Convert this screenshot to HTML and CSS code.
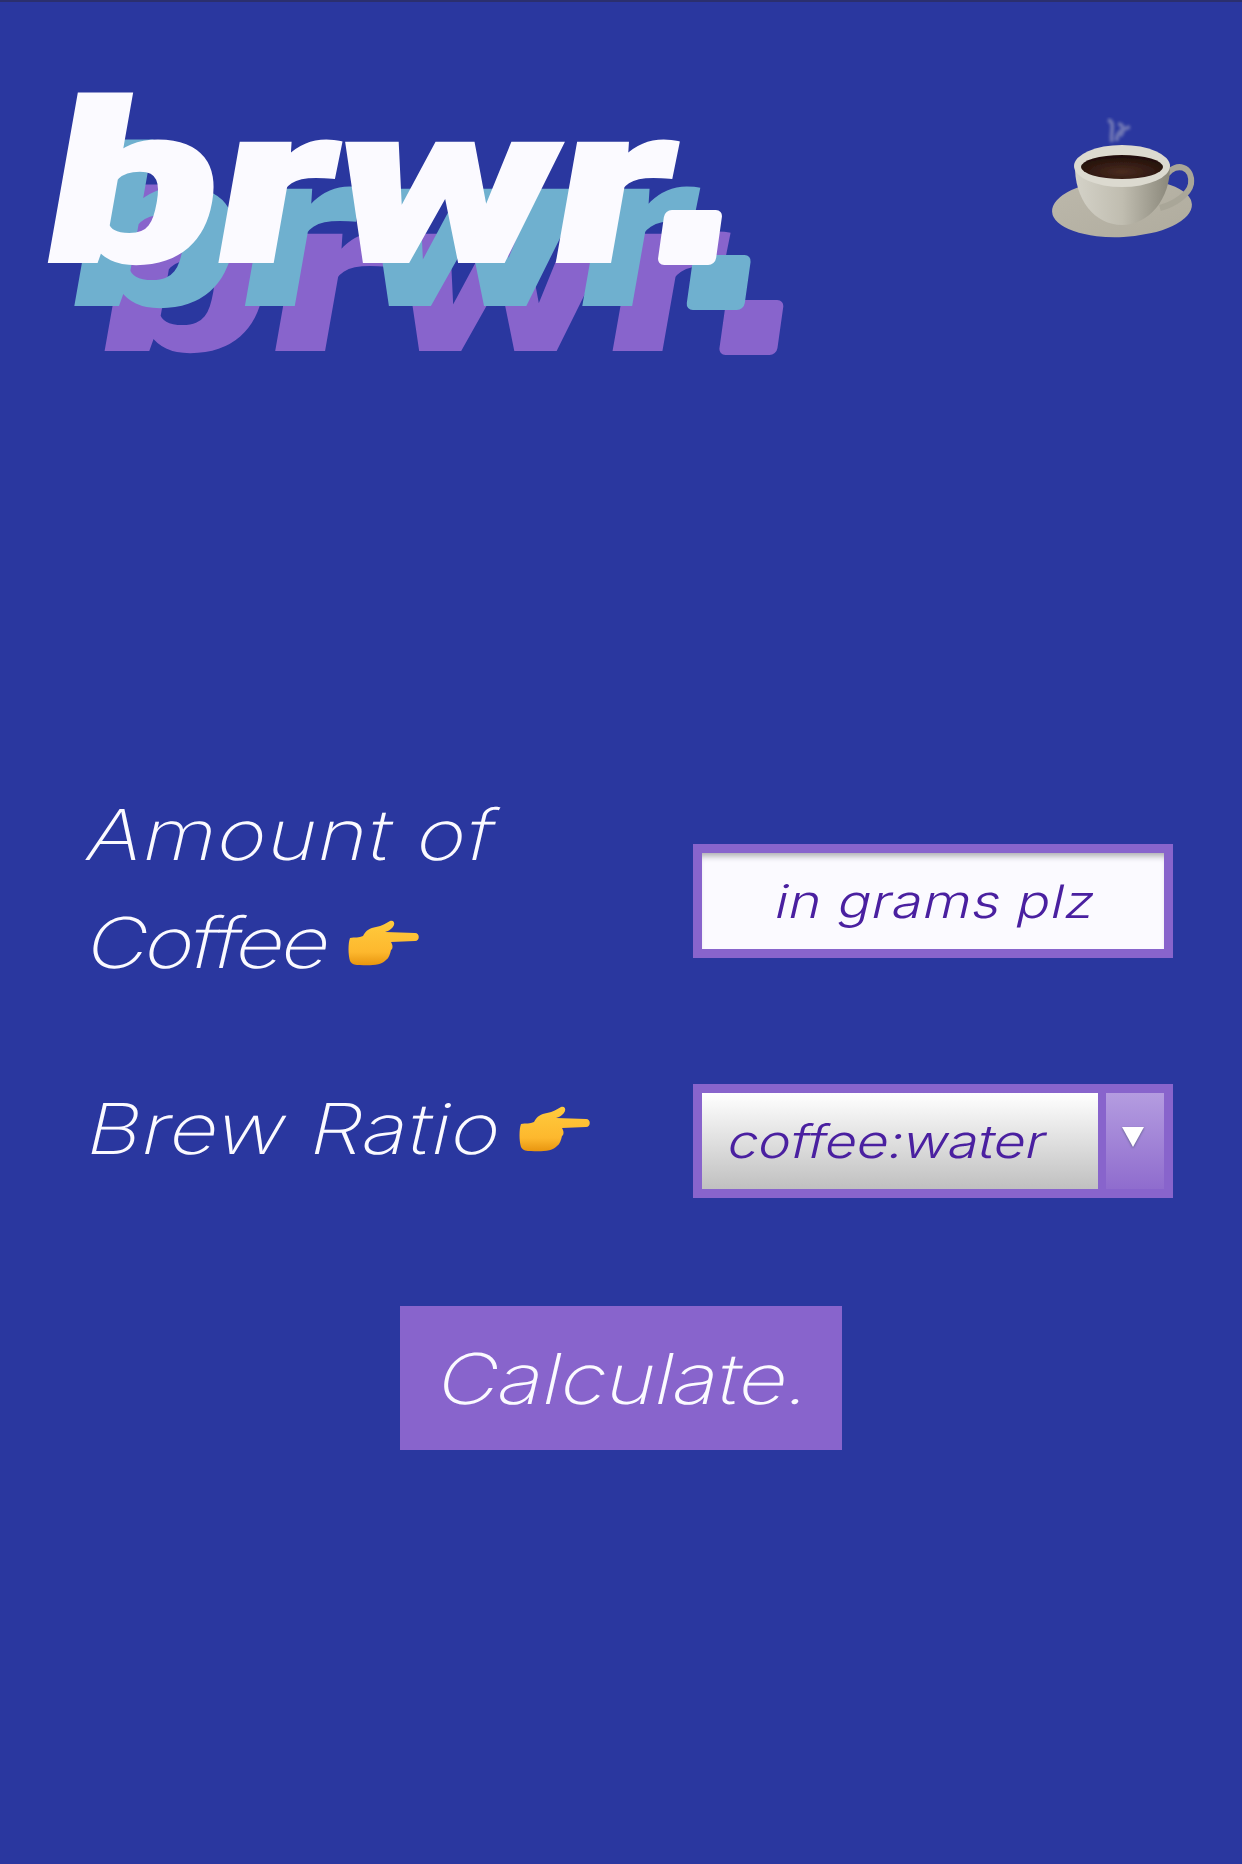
FILE: index.html
```html
<!DOCTYPE html>
<html>
  <head>
    <title>brwr.</title>
    <link rel="stylesheet" href="styles.css">
  </head>
  <body>
    <svg class="defs" width="0" height="0">
      <defs>
        <linearGradient id="handFill" x1="0" y1="0" x2="0" y2="1">
          <stop offset="0" stop-color="#ffcb3d" />
          <stop offset="0.7" stop-color="#fdb82e" />
          <stop offset="1" stop-color="#e8950f" />
        </linearGradient>
        <symbol id="hand" viewBox="16 18 76 50">
          <path fill="url(#handFill)" d="M20 38C25 37 29 38 33 36C36 30 40 28 46 27C52 26 56 23 60 21C63 20 65 22 64 25C63 28 59 31 55 32L85 33C90 33 90 41 85 41L61 42C63 45 63 49 61 50C60 54 59 58 56 60C52 65 40 66 30 65C26 65 22 65 20 61C18 55 18 43 20 38Z" />
        </symbol>
      </defs>
    </svg>

    <header class="top">
      <h1 class="logo"><span class="logo-text">brwr</span><span class="logo-dot">.</span></h1>
      <svg class="cup" width="200" height="150" viewBox="0 0 200 150">
        <defs>
          <linearGradient id="saucer" x1="0" y1="0" x2="1" y2="1">
            <stop offset="0" stop-color="#bcb8ab" />
            <stop offset="1" stop-color="#b0ac9e" />
          </linearGradient>
          <linearGradient id="body" x1="0" y1="0" x2="1" y2="0">
            <stop offset="0" stop-color="#d4d2c8" />
            <stop offset="0.5" stop-color="#c0bdb0" />
            <stop offset="1" stop-color="#8a877a" />
          </linearGradient>
          <radialGradient id="coffee" cx="0.5" cy="0.7" r="0.6">
            <stop offset="0" stop-color="#4a2c20" />
            <stop offset="1" stop-color="#24100a" />
          </radialGradient>
          <filter id="soft"><feGaussianBlur stdDeviation="0.6" /></filter>
          <filter id="steam"><feGaussianBlur stdDeviation="1.4" /></filter>
        </defs>
        <path d="M88 20c8 2 2 12 4 22M110 27c-8 2-14 6-13 14M98 24c6 0 6 8 2 12" fill="none" stroke="#8b90bd" stroke-width="4" opacity="0.7" filter="url(#steam)" />
        <g filter="url(#soft)">
          <ellipse cx="102" cy="108" rx="70" ry="29" fill="url(#saucer)" transform="rotate(-3 102 108)" />
          <path d="M147 74C156 62 173 66 171 84C169 94 155 104 140 108" fill="none" stroke="#a9a698" stroke-width="6" />
          <path d="M55 64C54 100 75 125 102 125C128 125 151 100 150 64Z" fill="url(#body)" />
          <ellipse cx="102" cy="66" rx="48" ry="21" fill="#dcdad0" />
          <ellipse cx="102" cy="67" rx="41" ry="12" fill="url(#coffee)" />
        </g>
      </svg>
    </header>

    <form class="brew-form">
      <label class="field-label">
        <span class="slant amount">Amount of</span><br>
        <span class="slant coffee">Coffee</span><svg class="hand hand-short"><use href="#hand" /></svg>
      </label>
      <div class="grams"><span class="slant small">in grams plz</span></div>

      <label class="field-label">
        <span class="slant brew">Brew Ratio</span><svg class="hand hand-long"><use href="#hand" /></svg>
      </label>
      <div class="ratio-box">
        <div class="ratio"><span class="slant small">coffee:water</span></div>
        <div class="arrow-box"><span class="arrow"></span></div>
      </div>

      <button class="calc" type="button"><span class="slant centred">Calculate.</span></button>
    </form>
  </body>
</html>
```

FILE: styles.css
```css
html,
body {
  margin: 0;
  height: 100%;
  overflow: hidden;
}

body {
  background-color: #2a379f;
  border-top: 2px solid #2b2f6e;
  box-sizing: border-box;
  font-family: "Inter", "Liberation Sans", sans-serif;
}

.defs {
  position: absolute;
}

.top {
  display: flex;
  justify-content: space-between;
  padding: 0 22px 0 36px;
}

.logo {
  position: relative;
  margin: 53px 0 0;
  width: 692px;
  height: 260px;
  font-family: "Roboto", sans-serif;
  font-size: 222px;
  line-height: 260px;
  font-weight: 900;
  color: #fbfaff;
}

/* the wordmark is wider and heavier than Roboto Black, so stretch it */
.logo-text {
  display: inline-block;
  transform: skewX(-10deg) scaleX(1.365);
  transform-origin: left 80%;
  -webkit-text-stroke: 4px #fbfaff;
  text-shadow: 23px 45px 0 #6fb0cf, 51px 90px 0 #8864cc;
}

.logo-dot {
  position: absolute;
  left: 625px;
  top: 155px;
  width: 58px;
  height: 55px;
  border-radius: 7px;
  line-height: 55px;
  font-size: 40px;
  color: transparent;
  background-color: #fbfaff;
  transform: skewX(-8deg);
  box-shadow: 35px 45px 0 #6fb0cf, 74px 90px 0 #8864cc;
}

.cup {
  margin-top: 98px;
}

.brew-form {
  display: grid;
  grid-template-columns: 1fr 480px;
  align-items: center;
  row-gap: 54px;
  margin-top: 466px;
  padding: 0 69px 0 83px;
}

.field-label {
  padding-bottom: 24px;
  font-size: 70px;
  line-height: 108px;
  font-weight: 200;
  color: #fbfaff;
}

.slant {
  display: inline-block;
  transform: skewX(-13deg) scaleX(1.2);
  transform-origin: left 72%;
}

.amount {
  letter-spacing: 0.9px;
}

.coffee {
  letter-spacing: -2.4px;
}

.brew {
  letter-spacing: 0.5px;
}

.small {
  font-size: 46px;
  font-weight: 300;
  line-height: 60px;
  color: #4a20a0;
}

.centred {
  letter-spacing: -0.5px;
  transform-origin: center 72%;
}

.hand {
  width: 76px;
  height: 50px;
  vertical-align: 0;
}

.hand-short {
  margin-left: 63px;
}

.hand-long {
  margin-left: 89px;
}

.grams,
.ratio-box {
  box-sizing: border-box;
  width: 480px;
  height: 114px;
  border: 9px solid #8864cc;
}

.grams {
  display: flex;
  align-items: center;
  justify-content: center;
  letter-spacing: 0.5px;
  background-color: #fbfaff;
  box-shadow: inset 0 7px 6px -4px #a9a9ad;
}

.grams .slant {
  transform-origin: center 72%;
}

.ratio-box {
  display: flex;
  gap: 8px;
  background-color: #8864cc;
}

.ratio {
  display: flex;
  align-items: center;
  flex: 1;
  padding-left: 24px;
  letter-spacing: -0.3px;
  background: linear-gradient(#ffffff, #c0c0c0);
}

.arrow-box {
  display: flex;
  justify-content: center;
  width: 58px;
  padding-top: 34px;
  box-sizing: border-box;
  background: linear-gradient(#b49ce0, #8f6cce);
}

.arrow {
  width: 0;
  height: 0;
  margin-left: -4px;
  border-left: 11px solid transparent;
  border-right: 11px solid transparent;
  border-top: 20px solid #ffffff;
  filter: drop-shadow(0 1px 1px #5f5f8a);
}

.calc {
  grid-column: 1 / -1;
  justify-self: center;
  width: 442px;
  height: 144px;
  margin: 45px 0 0 -15px;
  padding: 0;
  border: none;
  background-color: #8864cc;
  font-family: inherit;
  font-size: 70px;
  font-weight: 200;
  color: #fbfaff;
}
```
